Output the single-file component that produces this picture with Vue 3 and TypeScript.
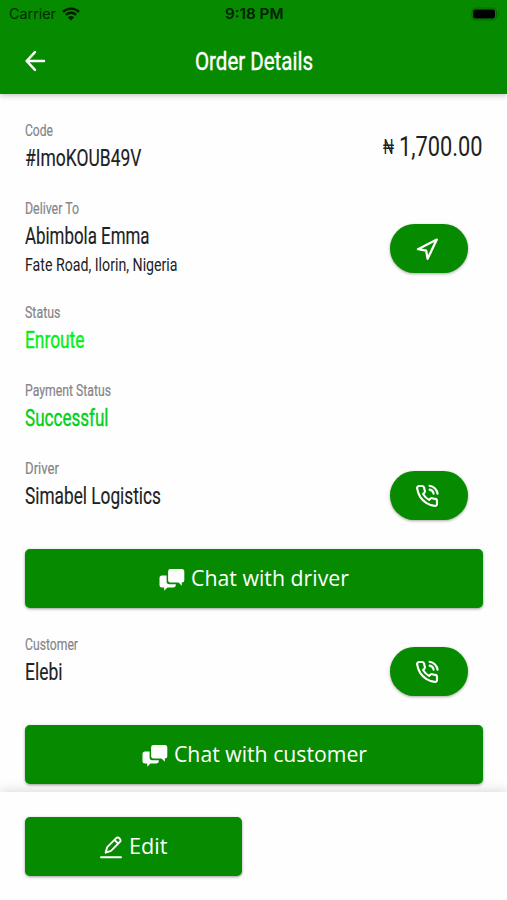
<script setup lang="ts">
import type { Directive } from 'vue'

interface Entry {
  label: string
  value: string
  labelWidth: number
  valueWidth: number
  tone?: 'enroute' | 'success'
  address?: string
  addressWidth?: number
  action?: 'navigate' | 'call'
  chat?: string
  chatWidth?: number
}

const entries: Entry[] = [
  { label: 'Deliver To', value: 'Abimbola Emma', labelWidth: 54, valueWidth: 124.5, address: 'Fate Road, Ilorin, Nigeria', addressWidth: 152.5, action: 'navigate' },
  { label: 'Status', value: 'Enroute', labelWidth: 35.5, valueWidth: 59.5, tone: 'enroute' },
  { label: 'Payment Status', value: 'Successful', labelWidth: 86, valueWidth: 83.5, tone: 'success' },
  { label: 'Driver', value: 'Simabel Logistics', labelWidth: 34, valueWidth: 136, action: 'call', chat: 'Chat with driver', chatWidth: 158 },
  { label: 'Customer', value: 'Elebi', labelWidth: 53, valueWidth: 37.5, action: 'call', chat: 'Chat with customer', chatWidth: 193 },
]

// Condenses a run of text horizontally to the given width.
const vFit: Directive<HTMLElement, number> = {
  mounted(el, { value }) {
    const natural = el.getBoundingClientRect().width
    el.style.transform = `scaleX(${value / natural})`
    el.style.marginRight = `${value - natural}px`
  },
}
</script>

<template>
  <div class="screen">
    <header class="header">
      <div class="statusbar">
        <div class="carrier">
          <span v-fit="47" class="fit">Carrier</span>
          <svg class="wifi" viewBox="0 0 18 14" width="18" height="14">
            <path d="M1 4.9a11.6 11.6 0 0 1 16 0M3.9 7.8a7.4 7.4 0 0 1 10.2 0" fill="none" stroke="#001b00" stroke-width="2.3" />
            <path d="M9 13.6 5.9 10.4a4.5 4.5 0 0 1 6.2 0Z" fill="#001b00" />
          </svg>
        </div>
        <div class="clock"><span v-fit="58.5" class="fit">9:18 PM</span></div>
        <div class="power">
          <svg viewBox="0 0 30 14" width="30" height="14">
            <rect x="1" y="1" width="24.5" height="12" rx="3.8" fill="none" stroke="#046a00" stroke-width="1.1" />
            <rect x="2.2" y="2.4" width="21.8" height="9" rx="2.2" fill="#000" />
            <path d="M27 5a2.3 2.3 0 0 1 0 4Z" fill="#046a00" />
          </svg>
        </div>
      </div>
      <div class="titlebar">
        <svg class="back" viewBox="0 0 22 22" width="22" height="22" fill="none" stroke="#fff" stroke-width="2.5" stroke-linecap="round" stroke-linejoin="round">
          <path d="M20 11H2.6M11 2.2 2.6 11l8.4 8.8" />
        </svg>
        <h1 class="title"><span v-fit="118" class="fit">Order Details</span></h1>
      </div>
    </header>

    <main class="content">
      <section class="entry">
        <div class="row">
          <div>
            <div class="label"><span v-fit="28" class="fit">Code</span></div>
            <div class="value"><span v-fit="116.5" class="fit">#ImoKOUB49V</span></div>
          </div>
          <div class="price">
            <span v-fit="11" class="fit currency">₦</span>
            <span v-fit="83.5" class="fit">1,700.00</span>
          </div>
        </div>
      </section>

      <section v-for="entry in entries" :key="entry.label" class="entry">
        <div class="row">
          <div>
            <div class="label"><span v-fit="entry.labelWidth" class="fit">{{ entry.label }}</span></div>
            <div class="value" :class="entry.tone"><span v-fit="entry.valueWidth" class="fit">{{ entry.value }}</span></div>
            <div v-if="entry.address" class="address"><span v-fit="entry.addressWidth!" class="fit">{{ entry.address }}</span></div>
          </div>
          <button v-if="entry.action" class="pill" :class="entry.action">
            <svg v-if="entry.action === 'navigate'" viewBox="0 0 24 24" width="24" height="24" fill="none" stroke="#fff" stroke-width="2.3" stroke-linejoin="round">
              <path d="M21.8 2.6 12.6 21.8 11.2 13.6 3 12.2Z" />
            </svg>
            <svg v-else viewBox="0 0 24 24" width="24" height="24" fill="none" stroke="#fff" stroke-width="2.1" stroke-linecap="round" stroke-linejoin="round">
              <path d="M14.6 5.6A5 5 0 0 1 18.6 9.6M14.6 1.8A9 9 0 0 1 22.6 9.8M22 16.92v3a2 2 0 0 1-2.18 2 19.79 19.79 0 0 1-8.63-3.07 19.5 19.5 0 0 1-6-6A19.79 19.79 0 0 1 2.12 4.18 2 2 0 0 1 4.11 2h3a2 2 0 0 1 2 1.72c.127.96.361 1.903.7 2.81a2 2 0 0 1-.45 2.11L8.09 9.91a16 16 0 0 0 6 6l1.27-1.27a2 2 0 0 1 2.11-.45c.907.339 1.85.573 2.81.7A2 2 0 0 1 22 16.92Z" />
            </svg>
          </button>
        </div>
        <button v-if="entry.chat" class="button chat">
          <svg viewBox="0 0 26 24" width="26" height="24" fill="#fff">
            <path d="M3 8.4h4.6v6.2a2.6 2.6 0 0 0 2.6 2.6h6.6v.6a2.6 2.6 0 0 1-2.6 2.6H8.4L5.2 23.7v-3.3H3A2.5 2.5 0 0 1 .5 17.9v-7A2.5 2.5 0 0 1 3 8.4Z" />
            <path d="M11.5 2h11.3a2.5 2.5 0 0 1 2.5 2.5v8.6a2.5 2.5 0 0 1-2.5 2.5v3.2l-3.3-3.2h-8a2.4 2.4 0 0 1-2.4-2.4V4.4A2.4 2.4 0 0 1 11.5 2Z" />
          </svg>
          <span v-fit="entry.chatWidth!" class="fit caption">{{ entry.chat }}</span>
        </button>
      </section>
    </main>

    <footer class="footer">
      <button class="button edit">
        <svg viewBox="0 0 24 24" width="24" height="24" fill="none" stroke="#fff" stroke-width="1.9" stroke-linejoin="round" stroke-linecap="round">
          <path d="M2 22.2h20" />
          <path d="M6.6 17.7 8.2 12.2 17.2 3.2a2.1 2.1 0 0 1 3 0l.7.7a2.1 2.1 0 0 1 0 3L12 15.8ZM15.6 5l3.6 3.6" />
        </svg>
        <span v-fit="38.5" class="fit caption">Edit</span>
      </button>
    </footer>
  </div>
</template>

<style>
body {
  margin: 0;
  overflow: hidden;
}
</style>

<style scoped>
.screen {
  display: flex;
  flex-direction: column;
  width: 507px;
  height: 900px;
  overflow: hidden;
  background: #fefefe;
  color: #202123;
  font-family: Roboto, "Liberation Sans", sans-serif;
}
.fit {
  display: inline-block;
  white-space: nowrap;
  transform-origin: 0 50%;
}
.header {
  flex: none;
  height: 94px;
  background: #058a00;
  box-shadow: 0 1px 6px rgba(0, 0, 0, 0.28);
}
.statusbar {
  display: grid;
  grid-template-columns: 1fr auto 1fr;
  align-items: center;
  height: 27px;
  padding: 0 6px 0 9px;
  color: #002b00;
  font-family: Inter, sans-serif;
  font-size: 14px;
}
.carrier {
  display: flex;
  align-items: center;
  gap: 6px;
}
.clock {
  font-weight: 600;
  color: #002000;
  padding-right: 2px;
}
.power {
  display: flex;
  justify-content: flex-end;
}
.titlebar {
  display: grid;
  grid-template-columns: 1fr auto 1fr;
  align-items: center;
  height: 67px;
  padding: 0 24px;
}
.title {
  margin: 0;
  font-size: 26.5px;
  font-weight: 400;
  line-height: 67px;
  color: #fff;
  -webkit-text-stroke: 0.4px #fff;
}
.content {
  flex: none;
  height: 698px;
  box-sizing: border-box;
  padding: 25px 24.5px 0 25.3px;
}
.entry {
  margin-bottom: 25px;
}
.row {
  display: flex;
  justify-content: space-between;
}
.label {
  height: 24px;
  line-height: 23px;
  font-size: 17px;
  color: #858588;
  -webkit-text-stroke: 0.2px currentColor;
}
.value {
  height: 29px;
  line-height: 31px;
  font-size: 24px;
  -webkit-text-stroke: 0.15px currentColor;
}
.enroute {
  color: #05ef19;
  -webkit-text-stroke-width: 0.4px;
}
.success {
  color: #05cf1d;
  -webkit-text-stroke-width: 0.4px;
}
.address {
  height: 26px;
  line-height: 30px;
  font-size: 18.5px;
}
.price {
  display: flex;
  gap: 5px;
  height: 53px;
  font-size: 28px;
  line-height: 56px;
}
.currency {
  font-size: 20px;
}
.pill {
  display: flex;
  align-items: center;
  justify-content: center;
  width: 78px;
  height: 49px;
  margin: 14px 14.5px -10px 0;
  padding: 0 5px 0 0;
  border: 0;
  border-radius: 25px;
  background: #058a00;
  box-shadow: 0 1px 3px rgba(0, 0, 0, 0.35);
}
.navigate {
  margin: 27px 14.5px 0 0;
}
.button {
  display: flex;
  align-items: center;
  justify-content: center;
  gap: 6px;
  width: 457.5px;
  height: 59px;
  padding: 0;
  border: 0;
  border-radius: 5px;
  background: #058a00;
  color: #fff;
  font-family: "Open Sans", sans-serif;
  font-size: 21.5px;
  box-shadow: 0 1px 3px rgba(0, 0, 0, 0.4);
}
.caption {
  line-height: 30px;
  padding-bottom: 2px;
}
.chat {
  margin-top: 39px;
}
.footer {
  position: relative;
  flex: 1;
  padding: 25px;
  background: #fefefe;
  box-shadow: 0 0 12px rgba(0, 0, 0, 0.18);
}
.edit {
  width: 217px;
}
</style>
